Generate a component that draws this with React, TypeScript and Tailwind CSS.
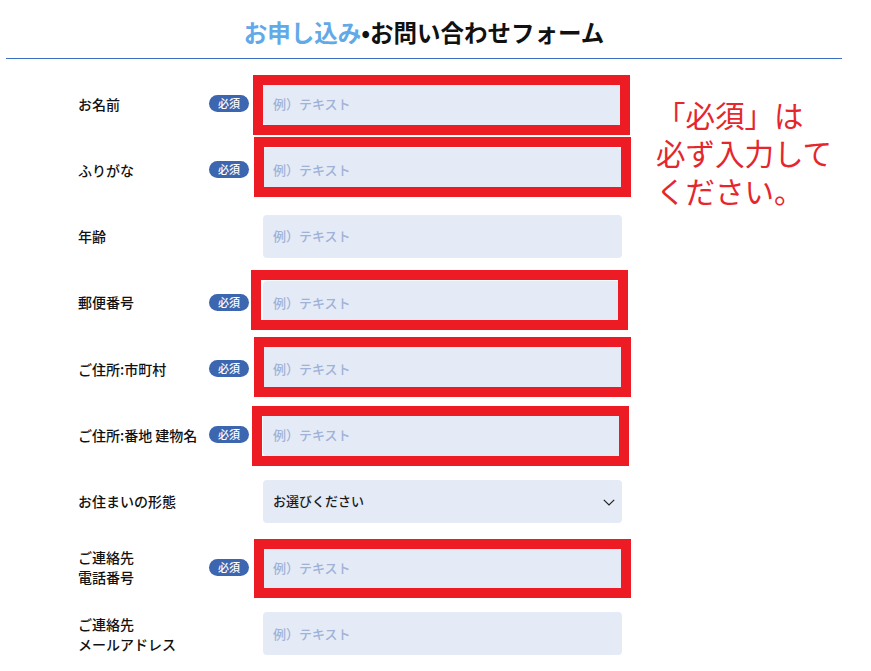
const fields = [
  { label: ["お名前"], required: true },
  { label: ["ふりがな"], required: true },
  { label: ["年齢"], required: false },
  { label: ["郵便番号"], required: true },
  { label: ["ご住所:市町村"], required: true },
  { label: ["ご住所:番地 建物名"], required: true },
  { label: ["お住まいの形態"], required: false, select: true },
  { label: ["ご連絡先", "電話番号"], required: true },
  { label: ["ご連絡先", "メールアドレス"], required: false },
];

// red annotation frames drawn over the screenshot
const marks = [
  "left-[253px] top-[75px] h-[60px]",
  "left-[254px] top-[137px] h-[60px]",
  "left-[251px] top-[270px] h-[60px]",
  "left-[254px] top-[337px] h-[60px]",
  "left-[252px] top-[406px] h-[60px]",
  "left-[254px] top-[539px] h-[59px]",
];

function Badge() {
  return (
    <span className="flex h-[17px] w-[40px] items-center justify-center rounded-full bg-[#3c66b0] text-[11px] leading-none font-medium text-white">
      必須
    </span>
  );
}

export default function App() {
  return (
    <div
      className="relative h-[671px] w-[871px] overflow-hidden bg-white text-[#111]"
      style={{ fontFamily: '"Noto Sans CJK JP", "Noto Sans", sans-serif' }}
    >
      <div className="mx-[6px] w-[836px] border-b border-[#3b6fc4] pt-[17px] pb-[10px] text-center text-[23.5px] leading-[31px] font-bold">
        <span className="text-[#62a9e8]">お申し込み</span>
        <span>•お問い合わせフォーム</span>
      </div>

      <div className="mt-[23px] flex flex-col gap-[23.25px] pl-[78px]">
        {fields.map((f, i) => (
          <div key={i} className="flex h-[43px] items-center">
            <div className="flex w-[171px] items-center justify-between">
              <p className="text-[14px] leading-[20px] font-medium">
                {f.label[0]}
                {f.label[1] && (
                  <>
                    <br />
                    {f.label[1]}
                  </>
                )}
              </p>
              {f.required && <Badge />}
            </div>
            <div className="relative ml-[14px] flex h-[43px] w-[359px] items-center rounded-[4px] bg-[#e4ebf6] px-[10px]">
              {f.select ? (
                <>
                  <span className="text-[13px] font-medium text-[#1a1a1a]">お選びください</span>
                  <svg
                    className="absolute right-[7px] top-[19px]"
                    width="12"
                    height="7"
                    viewBox="0 0 12 7"
                    fill="none"
                  >
                    <path d="M0.8 0.8 L6 6 L11.2 0.8" stroke="#222" strokeWidth="1.2" />
                  </svg>
                </>
              ) : (
                <span className="text-[13px] font-medium text-[#9fb2d8]">例）テキスト</span>
              )}
            </div>
          </div>
        ))}
      </div>

      {marks.map((m) => (
        <div key={m} className={`absolute w-[377px] border-[10px] border-[#ed1c24] ${m}`} />
      ))}

      <p className="absolute left-[656px] top-[95px] text-[29.5px] leading-[38px] text-[#e5262c]">
        「必須」は
        <br />
        必ず入力して
        <br />
        ください。
      </p>
    </div>
  );
}
